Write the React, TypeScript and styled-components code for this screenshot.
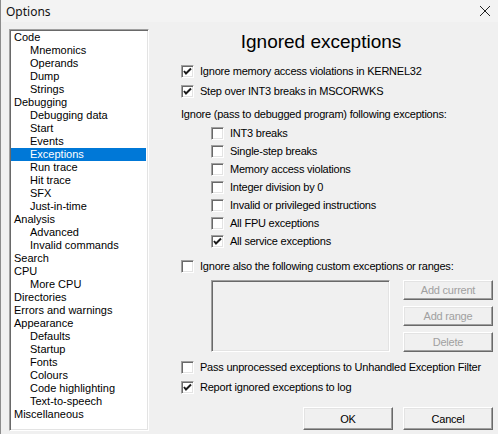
import React from "react";
import styled, { createGlobalStyle } from "styled-components";

const GlobalStyle = createGlobalStyle`
  html, body {
    margin: 0;
    padding: 0;
    background: #f0f0f0;
  }
  body {
    font-family: "Liberation Sans", Arial, sans-serif;
    font-size: 11px;
    color: #000;
  }
`;

type TreeItem = { label: string; level: number };

const treeItems: TreeItem[] = [
  { label: "Code", level: 0 },
  { label: "Mnemonics", level: 1 },
  { label: "Operands", level: 1 },
  { label: "Dump", level: 1 },
  { label: "Strings", level: 1 },
  { label: "Debugging", level: 0 },
  { label: "Debugging data", level: 1 },
  { label: "Start", level: 1 },
  { label: "Events", level: 1 },
  { label: "Exceptions", level: 1 },
  { label: "Run trace", level: 1 },
  { label: "Hit trace", level: 1 },
  { label: "SFX", level: 1 },
  { label: "Just-in-time", level: 1 },
  { label: "Analysis", level: 0 },
  { label: "Advanced", level: 1 },
  { label: "Invalid commands", level: 1 },
  { label: "Search", level: 0 },
  { label: "CPU", level: 0 },
  { label: "More CPU", level: 1 },
  { label: "Directories", level: 0 },
  { label: "Errors and warnings", level: 0 },
  { label: "Appearance", level: 0 },
  { label: "Defaults", level: 1 },
  { label: "Startup", level: 1 },
  { label: "Fonts", level: 1 },
  { label: "Colours", level: 1 },
  { label: "Code highlighting", level: 1 },
  { label: "Text-to-speech", level: 1 },
  { label: "Miscellaneous", level: 0 },
];

const subExceptions = [
  { label: "INT3 breaks", checked: false },
  { label: "Single-step breaks", checked: false },
  { label: "Memory access violations", checked: false },
  { label: "Integer division by 0", checked: false },
  { label: "Invalid or privileged instructions", checked: false },
  { label: "All FPU exceptions", checked: false },
  { label: "All service exceptions", checked: true },
];

const CheckBox: React.FC<{ checked?: boolean }> = ({ checked }) => (
  <Box>
    {checked && (
      <svg width="9" height="9" viewBox="0 0 9 9">
        <polyline points="1,4 3,6.5 8,1.5" fill="none" stroke="#1a1a1a" strokeWidth="2" />
      </svg>
    )}
  </Box>
);

const CheckRow: React.FC<{ checked?: boolean; label: string; indent?: boolean; h?: number }> = ({
  checked,
  label,
  indent,
  h,
}) => (
  <Row indent={indent} h={h}>
    <CheckBox checked={checked} />
    <span>{label}</span>
  </Row>
);

const App: React.FC = () => {
  return (
    <>
      <GlobalStyle />
      <Window>
        <TitleBar>
          <Title>Options</Title>
          <CloseIcon width="12" height="12" viewBox="0 0 12 12">
            <path d="M1 1 L11 11 M11 1 L1 11" stroke="#222" strokeWidth="1" />
          </CloseIcon>
        </TitleBar>
        <Content>
          <Tree>
            {treeItems.map((item) => (
              <TreeRow key={item.label} level={item.level} selected={item.label === "Exceptions"}>
                {item.label}
              </TreeRow>
            ))}
          </Tree>
          <Panel>
            <Heading>Ignored exceptions</Heading>
            <Group top={8}>
              <CheckRow checked label="Ignore memory access violations in KERNEL32" h={20} />
              <CheckRow checked label="Step over INT3 breaks in MSCORWKS" h={20} />
            </Group>
            <Label>Ignore (pass to debugged program) following exceptions:</Label>
            <Group>
              {subExceptions.map((ex) => (
                <CheckRow key={ex.label} indent checked={ex.checked} label={ex.label} h={18} />
              ))}
            </Group>
            <Group top={6}>
              <CheckRow label="Ignore also the following custom exceptions or ranges:" h={20} />
            </Group>
            <CustomArea>
              <RangeList />
              <SideButtons>
                <Button disabled>Add current</Button>
                <Button disabled>Add range</Button>
                <Button disabled>Delete</Button>
              </SideButtons>
            </CustomArea>
            <Group top={5}>
              <CheckRow label="Pass unprocessed exceptions to Unhandled Exception Filter" h={20} />
              <CheckRow checked label="Report ignored exceptions to log" h={20} />
            </Group>
            <Footer>
              <Button tall>OK</Button>
              <Button tall>Cancel</Button>
            </Footer>
          </Panel>
        </Content>
      </Window>
    </>
  );
};
export default App;

const Window = styled.div`
  width: 498px;
  height: 434px;
  box-sizing: border-box;
  border-left: 1px solid #8c8c8c;
  background: #f0f0f0;
  display: flex;
  flex-direction: column;
  overflow: hidden;
`;

const TitleBar = styled.div`
  height: 22px;
  flex: none;
  display: flex;
  align-items: center;
  justify-content: space-between;
  background: #f3f3f3;
  padding: 0 7px 0 5px;
`;

const Title = styled.span`
  font-family: "Noto Sans", "Open Sans", sans-serif;
  font-size: 12px;
  color: #111;
`;

const CloseIcon = styled.svg`
  display: block;
`;

const Content = styled.div`
  flex: 1;
  display: flex;
  padding: 7px 5px 0 8px;
`;

const Tree = styled.div`
  width: 140px;
  height: 402px;
  flex: none;
  box-sizing: border-box;
  background: #fff;
  border: 1px solid;
  border-color: #a0a0a0 #fff #fff #a0a0a0;
  box-shadow: inset 1px 1px #696969, inset -1px -1px #e3e3e3;
  padding: 1px 2px 1px 1px;
  overflow: hidden;
`;

const TreeRow = styled.div<{ level: number; selected?: boolean }>`
  height: 13px;
  line-height: 13px;
  white-space: nowrap;
  padding-left: ${(p) => (p.level ? 19 : 3)}px;
  background: ${(p) => (p.selected ? "#0078d7" : "transparent")};
  color: ${(p) => (p.selected ? "#fff" : "#000")};
`;

const Panel = styled.div`
  flex: 1;
  display: flex;
  flex-direction: column;
  padding-left: 32px;
  letter-spacing: -0.22px;
`;

const Heading = styled.div`
  font-size: 19px;
  line-height: 22px;
  margin-top: 2px;
  letter-spacing: 0;
  text-align: center;
  padding-right: 32px;
`;

const Group = styled.div<{ top?: number }>`
  display: flex;
  flex-direction: column;
  margin-top: ${(p) => p.top ?? 0}px;
`;

const Row = styled.div<{ indent?: boolean; h?: number }>`
  display: flex;
  align-items: center;
  gap: 6px;
  height: ${(p) => p.h ?? 20}px;
  padding-left: ${(p) => (p.indent ? 30 : 0)}px;
  white-space: nowrap;
`;

const Box = styled.span`
  width: 13px;
  height: 13px;
  flex: none;
  box-sizing: border-box;
  background: #fff;
  border: 1px solid;
  border-color: #a0a0a0 #fff #fff #a0a0a0;
  box-shadow: inset 1px 1px #696969, inset -1px -1px #e3e3e3;
  display: flex;
  align-items: center;
  justify-content: center;
`;

const Label = styled.div`
  height: 20px;
  line-height: 20px;
  margin-top: 3px;
  white-space: nowrap;
`;

const CustomArea = styled.div`
  display: flex;
  justify-content: space-between;
  margin-top: 4px;
  padding-left: 30px;
`;

const RangeList = styled.div`
  width: 179px;
  height: 72px;
  box-sizing: border-box;
  border: 1px solid;
  border-color: #a0a0a0 #fff #fff #a0a0a0;
  box-shadow: inset 1px 1px #696969, inset -1px -1px #e3e3e3;
`;

const SideButtons = styled.div`
  display: flex;
  flex-direction: column;
  gap: 6px;
`;

const Button = styled.button<{ tall?: boolean }>`
  width: 90px;
  height: ${(p) => (p.tall ? 23 : 20)}px;
  padding: 0;
  box-sizing: border-box;
  font-family: "Liberation Sans", Arial, sans-serif;
  font-size: 11px;
  letter-spacing: -0.22px;
  color: #000;
  background: #f0f0f0;
  border: 1px solid;
  border-color: #fff #696969 #696969 #fff;
  box-shadow: inset -1px -1px #a0a0a0, inset 1px 1px #e3e3e3;
  &:disabled {
    color: #a0a0a0;
  }
`;

const Footer = styled.div`
  display: flex;
  justify-content: flex-end;
  gap: 10px;
  margin-top: 10px;
`;
